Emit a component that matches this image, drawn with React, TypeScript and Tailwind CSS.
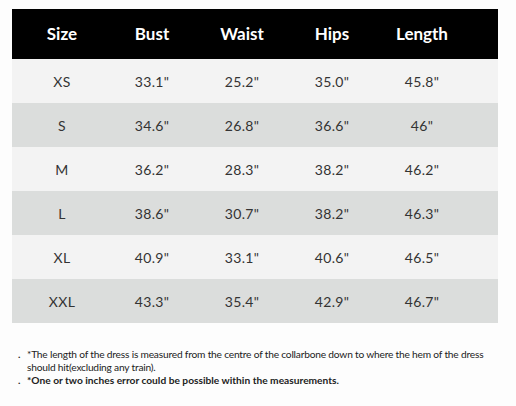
const HEADERS = ['Size', 'Bust', 'Waist', 'Hips', 'Length'];

const ROWS = [
  ['XS', '33.1"', '25.2"', '35.0"', '45.8"'],
  ['S', '34.6"', '26.8"', '36.6"', '46"'],
  ['M', '36.2"', '28.3"', '38.2"', '46.2"'],
  ['L', '38.6"', '30.7"', '38.2"', '46.3"'],
  ['XL', '40.9"', '33.1"', '40.6"', '46.5"'],
  ['XXL', '43.3"', '35.4"', '42.9"', '46.7"'],
];

// size chart with alternating row shades
export default function App() {
  return (
    <div
      className="w-[516px] h-[406px] bg-[#fdfdfd] pt-[9px] pl-3 text-[#333]"
      style={{ fontFamily: 'Lato, "Open Sans", sans-serif' }}
    >
      <div className="w-[486px]">
        {/* header */}
        <div className="grid grid-cols-[90px_90px_90px_90px_90px] pl-[5px] h-[50px] items-center bg-black text-white font-bold text-[17px]">
          {HEADERS.map((h) => (
            <div key={h} className="text-center">
              {h}
            </div>
          ))}
        </div>

        {/* rows */}
        {ROWS.map((row, i) => (
          <div
            key={row[0]}
            className={
              'grid grid-cols-[90px_90px_90px_90px_90px] pl-[5px] h-[44px] items-center text-[14px] tracking-[0.3px] ' +
              (i % 2 === 0 ? 'bg-[#f3f3f3]' : 'bg-[#dbdddc]')
            }
          >
            {row.map((c, j) => (
              <div key={j} className="text-center">
                {c}
              </div>
            ))}
          </div>
        ))}
      </div>

      {/* notes */}
      <div className="mt-[25px] pl-[6px] text-[10.2px] leading-[13px] text-[#222]">
        <div className="flex">
          <span className="w-[9px] shrink-0 font-bold">.</span>
          <span className="whitespace-nowrap tracking-[-0.2px]">
            *The length of the dress is measured from the centre of the collarbone down to where the hem of the dress
            <br />
            should hit(excluding any train).
          </span>
        </div>
        <div className="flex font-bold">
          <span className="w-[9px] shrink-0">.</span>
          <span>*One or two inches error could be possible within the measurements.</span>
        </div>
      </div>
    </div>
  );
}
